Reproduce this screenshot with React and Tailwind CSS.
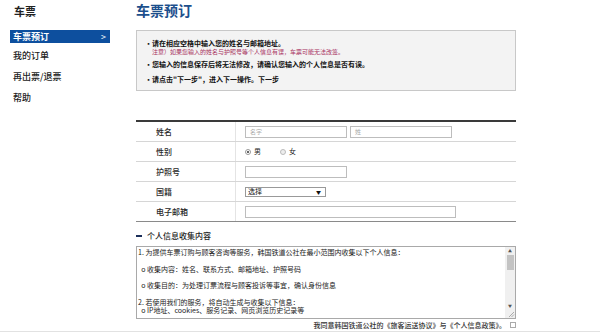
import React from 'react';

const cjk = "font-['Noto_Sans_CJK_SC','Noto_Sans',sans-serif]";

function SideItem({ label, active }) {
  if (active) {
    return (
      <div className="h-[13px] bg-[#0d4f9e] flex items-center justify-between pl-[3px] pr-[4px] text-white text-[9px] font-bold leading-none">
        <span>{label}</span>
        <span className="text-[9px] font-normal">&gt;</span>
      </div>
    );
  }
  return (
    <div className="h-[21px] flex items-center pl-[3px] text-[9px] text-[#222] font-medium leading-none">{label}</div>
  );
}

function Row({ label, children, last }) {
  return (
    <div className={`grid grid-cols-[100px_1fr] h-[20px] border-b ${last ? 'border-[#8a8a8a]' : 'border-[#d6d6d6]'}`}>
      <div className="border-r border-[#e4e4e4] flex items-center pl-[20px] text-[8px] font-medium text-[#2a2a2a] leading-none">{label}</div>
      <div className="flex items-center pl-[9px] gap-[3px]">{children}</div>
    </div>
  );
}

const inputCls = "h-[12px] border border-[#bdbdbd] bg-white flex items-center pl-[4px] text-[6px] text-[#aaa] leading-none";

const privacyText = `1. 为提供车票订购与顾客咨询等服务，韩国铁道公社在最小范围内收集以下个人信息：

  o 收集内容：姓名、联系方式、邮箱地址、护照号码

  o 收集目的：为处理订票流程与顾客投诉等事宜，确认身份信息

2. 若使用我们的服务，将自动生成与收集以下信息：
  o IP地址、cookies、服务记录、网页浏览历史记录等`;

export default function App() {
  return (
    <div className={`w-[600px] h-[333px] bg-white flex overflow-hidden relative ${cjk}`}>
      <aside className="w-[100px] ml-[10px] shrink-0">
        <div className="h-[22px] flex items-center pl-[4px] text-[11px] font-bold text-[#222] leading-none">车票</div>
        <div className="mt-[8px]">
          <SideItem label="车票预订" active />
          <div className="h-[2px]" />
          <SideItem label="我的订单" />
          <SideItem label="再出票/退票" />
          <SideItem label="帮助" />
        </div>
      </aside>

      <main className="ml-[26px] w-[380px] shrink-0">
        <h1 className="h-[20px] flex items-center text-[14px] font-bold text-[#1c4f8c] leading-none">车票预订</h1>

        <div className="mt-[10px] h-[61px] bg-[#f3f3f3] border border-[#c8c8c8] pt-[7px] pl-[8px] text-[7px] leading-none">
          <div className="h-[10px] flex items-center font-bold text-[#111]">
            <span className="w-[7px]">•</span>请在相应空格中输入您的姓名与邮箱地址。
          </div>
          <div className="h-[8px] flex items-center pl-[7px] text-[6px] text-[#a8325e]">
            注意）如果您输入的姓名与护照号等个人信息有误，车票可能无法改签。
          </div>
          <div className="mt-[3px] h-[10px] flex items-center font-bold text-[#111]">
            <span className="w-[7px]">•</span>您输入的信息保存后将无法修改，请确认您输入的个人信息是否有误。
          </div>
          <div className="mt-[5px] h-[10px] flex items-center font-bold text-[#111]">
            <span className="w-[7px]">•</span>请点击"下一步"，进入下一操作。下一步
          </div>
        </div>

        <div className="mt-[29px] border-t-2 border-[#3a3a3a]">
          <Row label="姓名">
            <div className={`${inputCls} w-[102px]`}>名字</div>
            <div className={`${inputCls} w-[102px]`}>姓</div>
          </Row>
          <Row label="性别">
            <div className="flex items-center text-[7px] text-[#222] leading-none">
              <span className="w-[6px] h-[6px] rounded-full border border-[#999] flex items-center justify-center">
                <span className="w-[2px] h-[2px] rounded-full bg-[#333]" />
              </span>
              <span className="ml-[3px]">男</span>
              <span className="ml-[19px] w-[6px] h-[6px] rounded-full border border-[#bbb] bg-[#eee]" />
              <span className="ml-[3px]">女</span>
            </div>
          </Row>
          <Row label="护照号">
            <div className={`${inputCls} w-[102px]`} />
          </Row>
          <Row label="国籍">
            <div className="h-[10px] w-[81px] border border-[#999] bg-white flex items-center justify-between pl-[2px] pr-[4px] text-[7px] text-[#111] leading-none">
              <span>选择</span>
              <span className="text-[5px]">▼</span>
            </div>
          </Row>
          <Row label="电子邮箱" last>
            <div className={`${inputCls} w-[211px]`} />
          </Row>
        </div>

        <div className="mt-[8px] h-[12px] flex items-center text-[8px] font-medium text-[#222] leading-none">
          <span className="w-[6px] h-[2px] bg-[#1c2f5a] mr-[5px]" />
          个人信息收集内容
        </div>

        <div className="mt-[4px] h-[73px] border border-[#a9a9a9] flex">
          <div className="flex-1 pl-[1px] pt-[1px] text-[7px] leading-[8.3px] text-[#222] whitespace-pre overflow-hidden">
            {privacyText}
          </div>
          <div className="w-[10px] flex flex-col">
            <div className="flex-1 bg-[#f0f0f0] flex flex-col items-center">
              <div className="h-[8px] flex items-center text-[4px] text-[#555] leading-none">▲</div>
              <div className="w-[7px] h-[15px] bg-[#c3c3c3]" />
              <div className="flex-1" />
              <div className="h-[8px] flex items-center text-[4px] text-[#555] leading-none">▼</div>
            </div>
            <div className="h-[8px] bg-[#f0f0f0] flex items-end justify-end">
              <svg width="7" height="7" viewBox="0 0 7 7">
                <path d="M6 1 L1 6 M6 3.5 L3.5 6" stroke="#999" strokeWidth="0.8" />
              </svg>
            </div>
          </div>
        </div>

        <div className="h-[12px] flex items-center justify-end text-[7px] font-medium text-[#333] leading-none">
          我同意韩国铁道公社的《旅客运送协议》与《个人信息政策》。
          <span className="ml-[4px] w-[6px] h-[6px] border border-[#aaa] bg-white" />
        </div>
      </main>

      <div className="absolute left-0 right-0 bottom-[1px] h-px bg-[#e2e2e2]" />
    </div>
  );
}
